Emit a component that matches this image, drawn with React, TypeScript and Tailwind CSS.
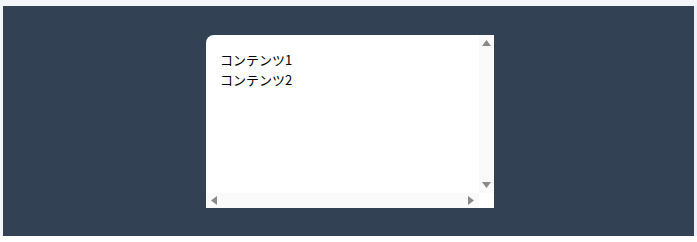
function Tri({ dir }: { dir: "up" | "down" | "left" | "right" }) {
  const vertical = dir === "up" || dir === "down";
  const pts = {
    up: "0,7 4.5,1 9,7",
    down: "0,1 4.5,7 9,1",
    left: "7,0 1,4.5 7,9",
    right: "1,0 7,4.5 1,9",
  }[dir];
  const w = vertical ? 9 : 8;
  const h = vertical ? 8 : 9;
  return (
    <svg width={w} height={h} viewBox={`0 0 ${w} ${h}`}>
      <polygon points={pts} fill="#8a8a8a" />
    </svg>
  );
}

export default function App() {
  return (
    <div className="w-[697px] h-[242px] bg-white">
      <div className="h-[6px] bg-[#f3f5f9]" />
      <div className="flex h-[230px]">
        <div className="w-[3px] bg-[#f3f5f9]" />
        <div className="w-[691px] bg-[#334155] flex justify-center pt-[29px] pl-[3px]">
          <div
            className="w-[288px] h-[173px] bg-white rounded-tl-lg overflow-hidden flex flex-col"
            style={{ fontFamily: '"Noto Sans CJK JP", "Noto Sans", sans-serif' }}
          >
            <div className="flex flex-1">
              <div className="flex-1 px-[14px] py-[15px] text-[13px] leading-[20px] text-black">
                <div>コンテンツ1</div>
                <div>コンテンツ2</div>
              </div>
              <div className="w-[15px] bg-[#fafafa] flex flex-col items-center justify-between py-[4px]">
                <Tri dir="up" />
                <Tri dir="down" />
              </div>
            </div>
            <div className="flex h-[15px]">
              <div className="flex-1 bg-[#fafafa] flex items-center justify-between px-[4px]">
                <Tri dir="left" />
                <Tri dir="right" />
              </div>
              <div className="w-[15px] bg-white" />
            </div>
          </div>
        </div>
        <div className="w-[3px] bg-[#eef0f7]" />
      </div>
    </div>
  );
}
